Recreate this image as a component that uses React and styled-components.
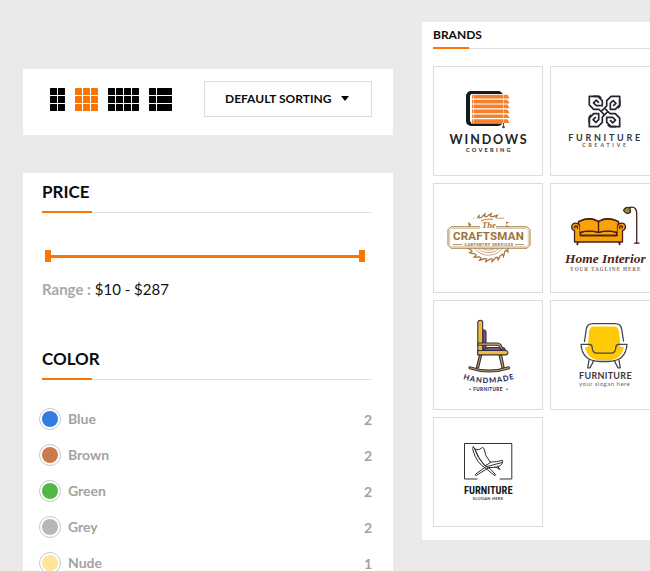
import React, { useState } from "react";
import styled, { createGlobalStyle } from "styled-components";

const ORANGE = "#f97504";

const GlobalStyle = createGlobalStyle`
  * { box-sizing: border-box; }
  body {
    margin: 0;
    background: #eaeaea;
    color: #0c0c0c;
    font-family: Lato, "Open Sans", sans-serif;
  }
  button, select, input { font: inherit; margin: 0; }
`;

const Page = styled.main`
  display: grid;
  grid-template-columns: minmax(0, 370px) minmax(0, 1fr);
  column-gap: 29px;
  height: 100vh;
  padding-left: 23px;
  overflow: hidden;
`;

const Column = styled.div`
  display: flex;
  flex-direction: column;
  gap: 38px;
  padding-top: 69px;
`;

const Toolbar = styled.div`
  display: flex;
  align-items: center;
  justify-content: space-between;
  padding: 12px 21px 18px 27px;
  background: #fff;
`;

const LayoutButtons = styled.div`
  display: flex;
  gap: 10px;
`;

const LayoutButton = styled.button`
  display: flex;
  padding: 0;
  border: 0;
  background: none;
  color: ${(p) => (p.$active ? ORANGE : "#000")};
  cursor: pointer;
`;

const SortBox = styled.div`
  display: grid;
  align-items: center;
  width: 168px;
  height: 36px;
  border: 1px solid #dedede;

  > * { grid-area: 1 / 1; }
  > svg { justify-self: end; margin: 0 22px 2px 0; pointer-events: none; }
`;

const SortSelect = styled.select`
  appearance: none;
  width: 100%;
  height: 100%;
  padding: 0 20px 2px;
  border: 0;
  background: none;
  color: #0c0c0c;
  font-size: 12px;
  font-weight: 700;
`;

const Filters = styled.aside`
  flex: 1 0 auto;
  padding: 0 21px 20px 19px;
  background: #fff;
`;

const Title = styled.h2`
  display: flex;
  flex-direction: column;
  margin: 0;
  font-size: ${(p) => (p.$small ? "12px" : "17px")};
  line-height: ${(p) => (p.$small ? "25px" : "38px")};
  font-weight: 700;

  &::after {
    content: "";
    height: 2px;
    background:
      linear-gradient(${ORANGE}, ${ORANGE}) left / ${(p) => (p.$small ? "36px" : "50px")} 2px no-repeat,
      linear-gradient(#e0e0e0, #e0e0e0) left bottom / 100% 1px no-repeat;
  }
`;

const PriceSection = styled.section`
  padding-bottom: 41px;
`;

const Slider = styled.div`
  display: grid;
  align-items: center;
  height: 12px;
  margin: 37px 7px 17px 3px;
  background: linear-gradient(${ORANGE}, ${ORANGE}) center / 100% 3px no-repeat;
`;

const Handle = styled.input`
  grid-area: 1 / 1;
  appearance: none;
  width: 100%;
  height: 12px;
  background: none;
  pointer-events: none;

  &::-webkit-slider-thumb {
    appearance: none;
    width: 6px;
    height: 12px;
    background: ${ORANGE};
    pointer-events: auto;
  }
`;

const RangeText = styled.p`
  margin: 0;
  color: #111;
  font-size: 15px;
  line-height: 20px;
  span { color: #a8a8a8; font-weight: 700; }
`;

const ColorList = styled.ul`
  margin: 21px 0 0;
  padding: 0;
  list-style: none;
`;

const ColorRow = styled.li`
  display: flex;
  align-items: center;
  justify-content: space-between;
  height: 36px;
  margin-left: -3px;
  color: #a3a3a3;
  font-size: 14px;
  font-weight: 700;
`;

const ColorLabel = styled.label`
  display: flex;
  align-items: center;
  gap: 7px;
`;

const ColorName = styled.span`
  padding-bottom: 2px;
`;

const Swatch = styled.input`
  appearance: none;
  width: 22px;
  height: 22px;
  padding: 2px;
  border: 1px solid #c8c8c8;
  border-radius: 50%;
  background: ${(p) => p.$color} content-box;
`;

const Brands = styled.section`
  align-self: start;
  min-width: 0;
  margin-top: 22px;
  padding: 0 0 13px 11px;
  background: #fff;
  overflow: hidden;
`;

const BrandGrid = styled.div`
  display: grid;
  grid-template-columns: repeat(2, 110px);
  gap: 7px;
  margin-top: 17px;
`;

const BrandCard = styled.a`
  display: block;
  height: 110px;
  border: 1px solid #dcdcdc;
  svg { display: block; width: 108px; height: 108px; }
`;

function GridIcon({ columns }) {
  const width = columns.reduce((sum, w) => sum + w + 1, -1);
  let x = 0;
  const starts = columns.map((w) => {
    const start = x;
    x += w + 1;
    return start;
  });
  return (
    <svg width={width} height="23" fill="currentColor" aria-hidden="true">
      {[0, 8, 16].map((y) =>
        columns.map((w, i) => <rect key={`${y}-${i}`} x={starts[i]} y={y} width={w} height="7" rx="0.5" />)
      )}
    </svg>
  );
}

function WindowsLogo() {
  return (
    <svg viewBox="0 0 108 108">
      <rect x="34" y="26" width="33" height="31" rx="3" fill="#fff" stroke="#151a1c" strokeWidth="4" />
      <rect x="37" y="27" width="38" height="29.5" fill="#fff" />
      {[0, 1, 2, 3, 4, 5].map((i) => (
        <path key={i} d={`M38 ${27.8 + i * 4.9}h35.5l2 3.7H38z`} fill="#f5812c" />
      ))}
      <path d="M39.5 27v29M69.5 27v29" stroke="#fff" strokeWidth=".5" />
      <path d="M69.5 56v4" stroke="#222" strokeWidth=".8" />
      <circle cx="69.5" cy="60" r="1.3" fill="#444" />
      <text x="15.5" y="76.5" fontFamily="Lato" fontSize="12.5" fontWeight="700" letterSpacing="1.9" fill="#222">WINDOWS</text>
      <text x="32" y="84.5" fontFamily="Lato" fontSize="5.5" fontWeight="900" letterSpacing="2.3" fill="#333">COVERING</text>
    </svg>
  );
}

function CloverLogo() {
  return (
    <svg viewBox="0 0 108 108">
      <g transform="translate(53.5 44.5)" fill="none" stroke="#23262c" strokeWidth="1.7" strokeLinejoin="round">
        {[0, 90, 180, 270].map((a) => (
          <path
            key={a}
            transform={`rotate(${a})`}
            d="M0-3.4 3.4 0M0-3.4 2.2-5.6V-10.8L6.6-15.2H15.2V-6.6L10.8-2.2H5.8V-8.2L8.6-11 11.4-8.2 8.6-5.6M-3.2-13.4-5.6-15.2H-11.4"
          />
        ))}
      </g>
      <text x="17.3" y="74" fontFamily="Lato" fontSize="9" fontWeight="700" letterSpacing="2.7" fill="#34363c">FURNITURE</text>
      <text x="31.3" y="80" fontFamily="Lato" fontSize="5" fontWeight="700" letterSpacing="2.9" fill="#55585e">CREATIVE</text>
    </svg>
  );
}

function CraftsmanLogo() {
  const teeth = Array.from({ length: 24 }, (_, i) => i * 15);
  return (
    <svg viewBox="0 0 108 108" fill="#a07238">
      <g transform="translate(54.5 53.7)" fill="none" stroke="#a07238">
        {[17.5, 15, 12.5].map((r) => <circle key={r} r={r} strokeWidth=".6" />)}
        {teeth.map((a) => (
          <path key={a} transform={`rotate(${a})`} d="M-3.2-21.2Q-.8-21 0-22.4L2.8-24 1.9-21.6Q2-21 2.6-21" strokeWidth="1.2" />
        ))}
      </g>
      <path d="M37 34.5h35v9H37z" fill="#fff" />
      <path d="M17 42.8H93L96 45.8V61.2L93 64.2H17L14 61.2V45.8Z" fill="#fff" stroke="#a07238" strokeWidth="1" />
      <path d="M18 44.5H92L94.3 46.8V60.4L92 62.7H18L15.7 60.4V46.8Z" fill="none" stroke="#a07238" strokeWidth=".4" />
      <path d="M46 41h16v5H46z" fill="#fff" />
      <text x="48" y="43.6" fontFamily="Liberation Serif" fontSize="8.5" fontStyle="italic" fontWeight="700">The</text>
      <path d="M47 36.8q6-2.5 12-1.5" fill="none" stroke="#a07238" strokeWidth=".9" />
      <text x="19" y="56" fontFamily="Roboto" fontSize="11.5" fontWeight="700" letterSpacing=".2">CRAFTSMAN</text>
      <text x="30.5" y="62.2" fontFamily="Roboto" fontSize="3.6" fontWeight="900" letterSpacing=".6">CARPENTRY SERVICES</text>
      <path d="M19 60.6h9M81 60.6h9" stroke="#a07238" strokeWidth=".8" />
    </svg>
  );
}

function SofaLogo() {
  return (
    <svg viewBox="0 0 108 108">
      <g fill="#f6a208" stroke="#4a1f18" strokeWidth="1.3" strokeLinejoin="round" strokeLinecap="round">
        <path d="M27 58.5l-.8 1.8M68 58.5l.8 1.8" strokeWidth="1.8" />
        <path d="M27.5 49V37.5Q39 32 47.5 37.5 56 32 67.5 37.5V49Z" />
        <path d="M47.5 37.5V49" />
        <path d="M29.5 48.5q9-3 18 0 9-3 18 0V52h-36z" />
        <path d="M23.5 46.5Q20.5 45.5 20.7 42.5 21.3 39 24.8 39.2 29 39.6 29.2 44V51.5H66V44Q66.2 39.6 70.3 39.2 74 39 74.5 42.5 74.6 45.5 71.5 46.5V58H23.5Z" />
        <path d="M29.2 48V38.5Q38 33 46.8 38.5V48Q38 45.5 29.2 48ZM48.2 48V38.5Q57 33 65.8 38.5V48Q57 45.5 48.2 48Z" stroke="none" />
        <path d="M29.2 48.3q9-2.5 18.3 0 9.3-2.5 18.5 0M47.5 38v10M24 44q-1-2 1-2.2 2 .2 1.4 2.5M71 44q1-2-1-2.2-2 .2-1.4 2.5M29.5 51.5H66M27.5 39.5V37.5Q39 32 47.5 37.5 56 32 67.5 37.5V39.5" fill="none" />
        <path d="M85.7 59V29Q85.5 23 80.5 23.2L77 24" fill="none" />
        <path d="M83.5 59.2h4.5" fill="none" />
        <path d="M72.5 26.5Q74.5 22 79 24L79.5 28Q76 31.5 72.5 26.5Z" fill="#899735" />
      </g>
      <text x="14" y="78.5" fontFamily="Liberation Serif" fontSize="13.5" fontStyle="italic" fontWeight="700" fill="#4c241c">Home Interior</text>
      <text x="19" y="86.5" fontFamily="Liberation Serif" fontSize="5.2" fontWeight="700" letterSpacing=".9" fill="#8b716b">YOUR TAGLINE HERE</text>
    </svg>
  );
}

function RockingChairLogo() {
  return (
    <svg viewBox="0 0 108 108">
      <g fill="#f2bd35" stroke="#363141" strokeWidth="1.1" strokeLinejoin="round" strokeLinecap="round">
        <path d="M48.8 29h1.7q1.5 0 1.5 2V49h-3.2z" fill="#76518c" />
        <path d="M50 49.5q1-3 4-3h14q3 0 3.5 3z" fill="#76518c" />
        <path d="M45.5 54l-3.2 13h2.2l3.2-13zM65 54l3 13h2.2l-2.5-13z" fill="#c79f56" />
        <path d="M35.5 65.8Q55 72.5 74.5 65.8 76 66.5 75.2 67.7 55 74.2 35.5 67.7 34.5 66.5 35.5 65.8Z" fill="#d6aa58" />
        <path d="M43.8 53V21.8q0-2.5 2.5-2.5 2.4 0 2.4 2.5V53z" />
        <path d="M43.8 42h20q4.4.6 4.4 6.5h-2q0-4.3-3-4.3H43.8z" fill="#d6aa58" />
        <path d="M43.8 49.5H72q2 .4 2 2.2 0 2-2 2.2H43.8z" />
      </g>
      <path id="handmade-arc" d="M29 78Q54.5 86.5 83 77" fill="none" />
      <text fontFamily="Lato" fontSize="7.5" fontWeight="900" letterSpacing="1" fill="#353057">
        <textPath href="#handmade-arc">HANDMADE</textPath>
      </text>
      <text x="39.3" y="90" fontFamily="Lato" fontSize="4.6" fontWeight="900" letterSpacing=".4" fill="#353057">FURNITURE</text>
      <circle cx="36" cy="88.3" r=".8" fill="#353057" />
      <circle cx="73" cy="88.3" r=".8" fill="#353057" />
    </svg>
  );
}

function ArmchairLogo() {
  return (
    <svg viewBox="0 0 108 108">
      <path d="M43 25.5H63Q67.5 25.5 68 31L69.5 46H73Q70 59 58 59.3H49Q37 59 34 46H37L38 31Q38.5 25.5 43 25.5Z" fill="#ffc907" />
      <g fill="none" stroke="#44474b" strokeWidth="1.3" strokeLinejoin="round" strokeLinecap="round">
        <path d="M33.5 40.5L35.2 28.5Q36 22.7 42 22.7H64Q70 22.7 70.8 28.5L72.5 40" />
        <path d="M30 43.3H38.5Q41 43.3 41.2 46.5 41.5 52.2 46 52.2H60Q64.5 52.2 64.8 46.5 65 43.3 67.5 43.3H76Q75 60.3 57 60.5H49Q31 60.3 30 43.3Z" />
        <path d="M38 59l-1.3 7.8h2.4l3.4-6.7M68 59l1.3 7.8h-2.4l-3.4-6.7" />
      </g>
      <text x="28" y="77.5" fontFamily="Lato" fontSize="9" fontWeight="700" letterSpacing=".3" fill="#393b3f">FURNITURE</text>
      <text x="28" y="85" fontFamily="Lato" fontSize="6.2" letterSpacing=".4" fill="#6c6e72">your slogan here</text>
    </svg>
  );
}

function DeckChairLogo() {
  return (
    <svg viewBox="0 0 108 108">
      <g fill="none" stroke="#303234" strokeWidth="1" strokeLinejoin="round" strokeLinecap="round">
        <path d="M43 61H30.5V25.5H77.8V61H66" />
        <path d="M39.2 29Q38 30 39.2 33 42.5 45 52 50.5L60 57Q61.5 58.2 61.7 56.8 57 50.5 51.5 48 44 41 41 31.5 40.5 29 39.2 29Z" />
        <path d="M41 31.2Q45 33.2 48.5 29.5L50 30.5Q50.5 37.5 56.5 44.5L51 48Q44 40 41 31.2Z" />
        <path d="M56 44.2Q63 44 68.5 42.3 69.5 43.3 67.5 46.5 64 50 55 49.5L42.3 57.5Q40.8 57.8 41.5 56.2L51.5 49 68 44.5M61 49l5 2M64 48l1 3.5" />
      </g>
      <text x="30" y="75.5" fontFamily="'Liberation Sans Narrow', 'Roboto Condensed', Roboto" fontSize="10.5" fontWeight="700" fill="#171819">FURNITURE</text>
      <text x="38.7" y="82.4" fontFamily="Lato" fontSize="4" fontWeight="700" letterSpacing=".3" fill="#444">SLOGAN HERE</text>
    </svg>
  );
}

const layouts = [
  { name: "Two columns", columns: [7, 7] },
  { name: "Three columns", columns: [7, 7, 7] },
  { name: "Four columns", columns: [7, 7, 7, 7] },
  { name: "List", columns: [7, 15] },
];

const colors = [
  { name: "Blue", value: "#337de0", count: 2 },
  { name: "Brown", value: "#cb7b4b", count: 2 },
  { name: "Green", value: "#51b848", count: 2 },
  { name: "Grey", value: "#b5b7b9", count: 2 },
  { name: "Nude", value: "#ffe49b", count: 1 },
];

const brands = [
  { name: "Windows Covering", Logo: WindowsLogo },
  { name: "Furniture Creative", Logo: CloverLogo },
  { name: "The Craftsman", Logo: CraftsmanLogo },
  { name: "Home Interior", Logo: SofaLogo },
  { name: "Handmade Furniture", Logo: RockingChairLogo },
  { name: "Furniture armchairs", Logo: ArmchairLogo },
  { name: "Furniture deck chairs", Logo: DeckChairLogo },
];

export default function App() {
  const [active, setActive] = useState(1);
  const [low, setLow] = useState(10);
  const [high, setHigh] = useState(287);

  return (
    <>
      <GlobalStyle />
      <Page>
        <Column>
          <Toolbar>
            <LayoutButtons>
              {layouts.map((layout, i) => (
                <LayoutButton
                  key={layout.name}
                  type="button"
                  aria-label={layout.name}
                  aria-pressed={active === i}
                  $active={active === i}
                  onClick={() => setActive(i)}
                >
                  <GridIcon columns={layout.columns} />
                </LayoutButton>
              ))}
            </LayoutButtons>
            <SortBox>
              <SortSelect aria-label="Sort products">
                <option>DEFAULT SORTING</option>
              </SortSelect>
              <svg width="8" height="5" aria-hidden="true"><path d="M0 0h8L4 5z" /></svg>
            </SortBox>
          </Toolbar>
          <Filters>
            <PriceSection>
              <Title>PRICE</Title>
              <Slider>
                <Handle type="range" aria-label="Lowest price" min="10" max="287" value={low}
                  onChange={(e) => setLow(Math.min(Number(e.target.value), high))} />
                <Handle type="range" aria-label="Highest price" min="10" max="287" value={high}
                  onChange={(e) => setHigh(Math.max(Number(e.target.value), low))} />
              </Slider>
              <RangeText><span>Range :</span> ${low} - ${high}</RangeText>
            </PriceSection>
            <section>
              <Title>COLOR</Title>
              <ColorList>
                {colors.map((color) => (
                  <ColorRow key={color.name}>
                    <ColorLabel>
                      <Swatch type="checkbox" $color={color.value} />
                      <ColorName>{color.name}</ColorName>
                    </ColorLabel>
                    <span>{color.count}</span>
                  </ColorRow>
                ))}
              </ColorList>
            </section>
          </Filters>
        </Column>
        <Brands>
          <Title $small>BRANDS</Title>
          <BrandGrid>
            {brands.map(({ name, Logo }) => (
              <BrandCard key={name} href="#" aria-label={name}><Logo /></BrandCard>
            ))}
          </BrandGrid>
        </Brands>
      </Page>
    </>
  );
}
